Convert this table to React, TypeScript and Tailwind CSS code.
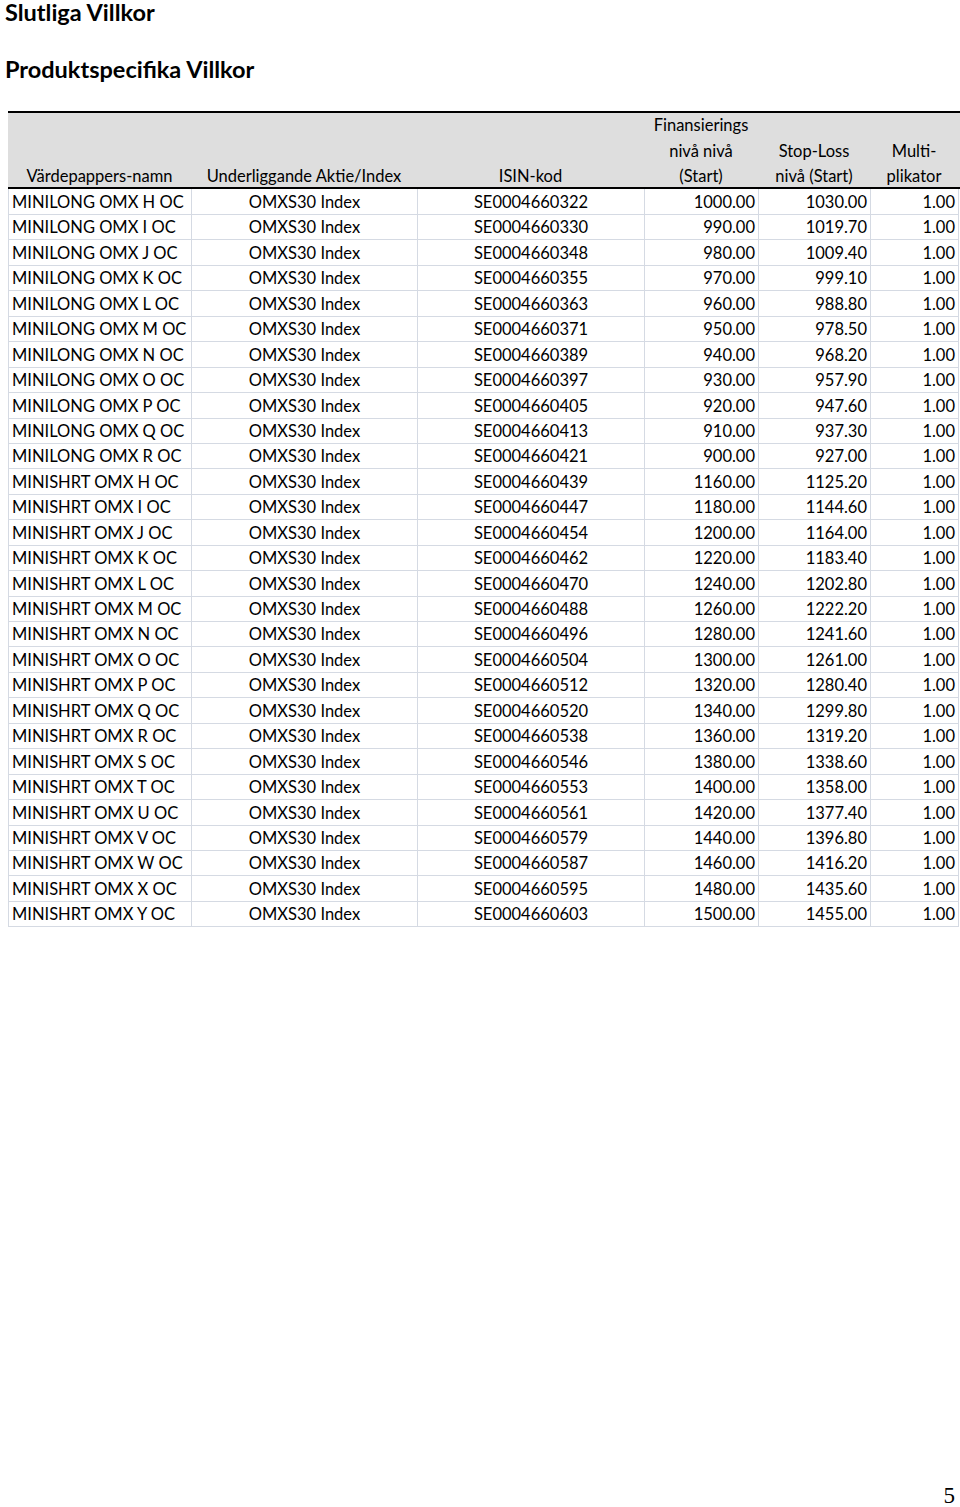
import React from 'react'

const isinSuffix = [
  '322', '330', '348', '355', '363', '371', '389', '397', '405', '413', '421',
  '439', '447', '454', '462', '470', '488', '496', '504', '512', '520', '538',
  '546', '553', '561', '579', '587', '595', '603',
]

const longLetters = ['H', 'I', 'J', 'K', 'L', 'M', 'N', 'O', 'P', 'Q', 'R']
const shortLetters = ['H', 'I', 'J', 'K', 'L', 'M', 'N', 'O', 'P', 'Q', 'R', 'S', 'T', 'U', 'V', 'W', 'X', 'Y']

type Row = { name: string; isin: string; fin: string; stop: string }

const rows: Row[] = [
  ...longLetters.map((l, i) => {
    const fin = 1000 - i * 10
    return { name: `MINILONG OMX ${l} OC`, fin: fin.toFixed(2), stop: (fin * 1.03).toFixed(2) }
  }),
  ...shortLetters.map((l, i) => {
    const fin = 1160 + i * 20
    return { name: `MINISHRT OMX ${l} OC`, fin: fin.toFixed(2), stop: (fin * 0.97).toFixed(2) }
  }),
].map((r, i) => ({ ...r, isin: `SE0004660${isinSuffix[i]}` }))

const cols = 'grid grid-cols-[183px_226px_227px_114px_112px_88px]'
const cell = 'border-r border-b border-[#d5dae3] whitespace-nowrap pt-[2px] leading-[23px]'

export default function App() {
  return (
    <div className="relative w-[960px] h-[1507px] bg-white text-black font-['Lato',sans-serif]">
      <h1 className="pl-[5px] text-[23.5px] font-bold leading-[25px]">Slutliga Villkor</h1>
      <h2 className="pl-[5px] mt-[32px] text-[23.5px] font-bold leading-[25px]">Produktspecifika Villkor</h2>

      <div className="ml-[8px] mt-[29px] w-[952px] text-[16.5px] leading-[25.5px]">
        {/* header */}
        <div className={`${cols} h-[78px] bg-[#dedede] border-t-2 border-b-2 border-black items-end text-center`}>
          <div>Värdepappers-namn</div>
          <div>Underliggande Aktie/Index</div>
          <div>ISIN-kod</div>
          <div>Finansierings<br />nivå nivå<br />(Start)</div>
          <div>Stop-Loss<br />nivå (Start)</div>
          <div>Multi-<br />plikator</div>
        </div>
        <div className="border-l border-[#d5dae3] w-[951px]">
          {rows.map((r) => (
            <div key={r.isin} className={`${cols} h-[25.45px]`}>
              <div className={`${cell} pl-[3px]`}>{r.name}</div>
              <div className={`${cell} text-center`}>OMXS30 Index</div>
              <div className={`${cell} text-center`}>{r.isin}</div>
              <div className={`${cell} text-right pr-[3px]`}>{r.fin}</div>
              <div className={`${cell} text-right pr-[3px]`}>{r.stop}</div>
              <div className={`${cell} text-right pr-[3px]`}>1.00</div>
            </div>
          ))}
        </div>
      </div>

      <div className="absolute right-[5px] bottom-[0px] font-['Liberation_Serif',serif] text-[23px] leading-none">5</div>
    </div>
  )
}
